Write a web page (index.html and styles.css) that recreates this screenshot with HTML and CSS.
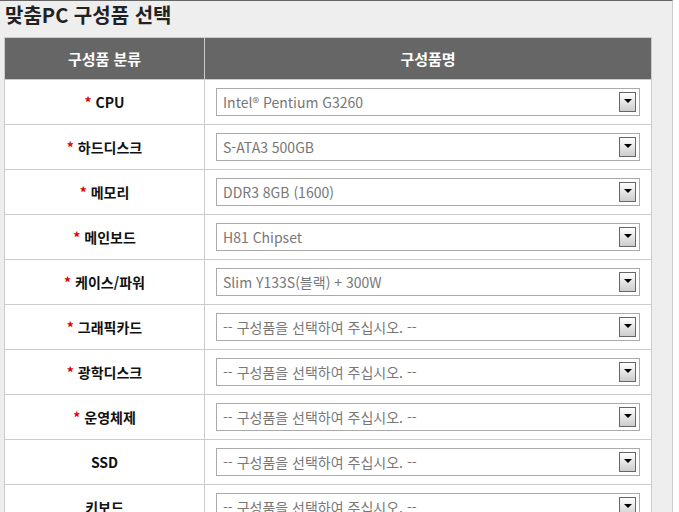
FILE: index.html
```html
<!DOCTYPE html>
<html lang="ko">
<head>
  <meta charset="UTF-8">
  <title>맞춤PC 구성품 선택</title>
  <meta name="viewport" content="width=device-width, initial-scale=1.0">
  <link rel="stylesheet" href="styles.css">
</head>
<body>

<div class="wrap">
  <h3 class="title">맞춤PC 구성품 선택</h3>

  <table class="parts">
    <thead>
      <tr>
        <th class="col-kind">구성품 분류</th>
        <th>구성품명</th>
      </tr>
    </thead>
    <tbody>
      <tr>
        <td class="kind"><span class="req">*</span> CPU</td>
        <td><div class="pick"><span class="pick-text">Intel® Pentium G3260</span><span class="arrow"></span></div></td>
      </tr>
      <tr>
        <td class="kind"><span class="req">*</span> 하드디스크</td>
        <td><div class="pick"><span class="pick-text">S-ATA3 500GB</span><span class="arrow"></span></div></td>
      </tr>
      <tr>
        <td class="kind"><span class="req">*</span> 메모리</td>
        <td><div class="pick"><span class="pick-text">DDR3 8GB (1600)</span><span class="arrow"></span></div></td>
      </tr>
      <tr>
        <td class="kind"><span class="req">*</span> 메인보드</td>
        <td><div class="pick"><span class="pick-text">H81 Chipset</span><span class="arrow"></span></div></td>
      </tr>
      <tr>
        <td class="kind"><span class="req">*</span> 케이스/파워</td>
        <td><div class="pick"><span class="pick-text">Slim Y133S(블랙) + 300W</span><span class="arrow"></span></div></td>
      </tr>
      <tr>
        <td class="kind"><span class="req">*</span> 그래픽카드</td>
        <td><div class="pick"><span class="pick-text">-- 구성품을 선택하여 주십시오. --</span><span class="arrow"></span></div></td>
      </tr>
      <tr>
        <td class="kind"><span class="req">*</span> 광학디스크</td>
        <td><div class="pick"><span class="pick-text">-- 구성품을 선택하여 주십시오. --</span><span class="arrow"></span></div></td>
      </tr>
      <tr>
        <td class="kind"><span class="req">*</span> 운영체제</td>
        <td><div class="pick"><span class="pick-text">-- 구성품을 선택하여 주십시오. --</span><span class="arrow"></span></div></td>
      </tr>
      <tr>
        <td class="kind">SSD</td>
        <td><div class="pick"><span class="pick-text">-- 구성품을 선택하여 주십시오. --</span><span class="arrow"></span></div></td>
      </tr>
      <tr>
        <td class="kind">키보드</td>
        <td><div class="pick"><span class="pick-text">-- 구성품을 선택하여 주십시오. --</span><span class="arrow"></span></div></td>
      </tr>
    </tbody>
  </table>
</div>

</body>
</html>
```

FILE: styles.css
```css
body {
  margin: 0;
  background: #fff;
  font-family: "Noto Sans CJK KR", "Noto Sans", sans-serif;
}
.wrap {
  width: 668px;
  padding: 0 0 40px 4px;
  background: #eee;
  border-top: 1px solid #666;
  border-right: 1px solid #ccc;
}
.title {
  margin: 0;
  height: 36px;
  padding-left: 1px;
  font-size: 20px;
  line-height: 28px;
  font-weight: bold;
  color: #222;
}
.parts {
  width: 648px;
  border-collapse: collapse;
  background: #fff;
  border: 1px solid #ccc;
}
.parts th {
  height: 41px;
  padding: 0;
  background: #666;
  color: #fff;
  font-size: 15px;
  font-weight: bold;
  border-left: 1px solid #ccc;
}
.parts th.col-kind {
  width: 199px;
  border-left: none;
}
.parts td {
  height: 44px;
  padding: 0 11px;
  border: 1px solid #ccc;
}
.kind {
  text-align: center;
  font-size: 14px;
  font-weight: bold;
  color: #111;
}
.req {
  color: #d00;
}
.pick {
  display: flex;
  align-items: center;
  height: 26px;
  padding: 0 3px 0 6px;
  border: 1px solid #aaa;
  background: #fff;
}
.pick-text {
  flex: 1;
  font-size: 14px;
  color: #777;
  white-space: nowrap;
}
.arrow {
  position: relative;
  width: 15px;
  height: 18px;
  border: 1px solid #666;
  background: linear-gradient(#fff, #ccc);
}
.arrow::after {
  content: "";
  position: absolute;
  left: 4px;
  top: 6px;
  border-left: 4px solid transparent;
  border-right: 4px solid transparent;
  border-top: 4px solid #000;
}
```
